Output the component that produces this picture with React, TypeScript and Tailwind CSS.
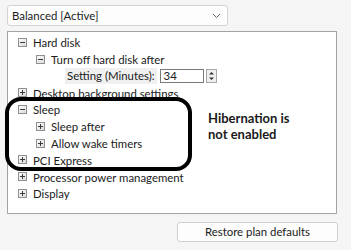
import { ReactNode } from 'react';

function Expander({ open }: { open: boolean }) {
  return (
    <svg width="9" height="9" viewBox="0 0 9 9" className="shrink-0">
      <defs>
        <linearGradient id={open ? 'gm' : 'gp'} x1="0" y1="0" x2="1" y2="1">
          <stop offset="0" stopColor="#ffffff" />
          <stop offset="1" stopColor="#d8d8d8" />
        </linearGradient>
      </defs>
      <rect x="0.5" y="0.5" width="8" height="8" fill={`url(#${open ? 'gm' : 'gp'})`} stroke="#8e8f8f" />
      <path d="M2 4.5h5" stroke="#3a3a3a" strokeWidth="1" />
      {!open && <path d="M4.5 2v5" stroke="#3a3a3a" strokeWidth="1" />}
    </svg>
  );
}

function Row({ level, open, children }: { level: number; open: boolean; children: ReactNode }) {
  return (
    <div className={`flex h-[16.8px] items-center gap-[6px] ${level === 0 ? 'pl-[10px]' : 'pl-[28px]'}`}>
      <Expander open={open} />
      <span className="whitespace-nowrap pt-[1px]">{children}</span>
    </div>
  );
}

export default function App() {
  return (
    <div className="relative h-[250px] w-[351px] overflow-hidden bg-[#f5f5f5] font-['Lato',sans-serif] text-[11.4px] text-[#1b1b1b]">
      {/* plan selector */}
      <div className="ml-[7px] mt-[5px] flex h-[21px] w-[221px] items-center justify-between rounded-[3px] border border-[#d3d3d3] bg-[#fdfdfd] pl-[4px] pr-[6px]">
        <span className="leading-none">Balanced [Active]</span>
        <svg width="9" height="6" viewBox="0 0 9 6">
          <path d="M1 1l3.5 3.5L8 1" fill="none" stroke="#6a6a6a" strokeWidth="1" />
        </svg>
      </div>

      {/* settings tree */}
      <div className="ml-[7px] mt-[5px] h-[183px] w-[330px] border border-[#a3a3a3] bg-white pt-[2px] leading-none">
        <Row level={0} open>Hard disk</Row>
        <Row level={1} open>Turn off hard disk after</Row>
        <div className="flex h-[16.8px] items-center pl-[57px]">
          <span className="whitespace-nowrap bg-[#f0f0f0] px-[2px] py-[2px]">Setting (Minutes):</span>
          <div className="ml-[3px] flex h-[14px] w-[44px] items-center border border-[#7a7a7a] pl-[3px]">34</div>
          <div className="ml-[2px] flex h-[14px] w-[11px] flex-col border border-[#a8a8a8] bg-[#eeeeee]">
            <svg width="9" height="6" viewBox="0 0 9 6"><path d="M2 4.5h5L4.5 2z" fill="#333" /></svg>
            <svg width="9" height="6" viewBox="0 0 9 6"><path d="M2 1.5h5L4.5 4z" fill="#333" /></svg>
          </div>
        </div>
        <Row level={0} open={false}>Desktop background settings</Row>
        <Row level={0} open>Sleep</Row>
        <Row level={1} open={false}>Sleep after</Row>
        <Row level={1} open={false}>Allow wake timers</Row>
        <Row level={0} open={false}>PCI Express</Row>
        <Row level={0} open={false}>Processor power management</Row>
        <Row level={0} open={false}>Display</Row>
      </div>

      {/* annotation */}
      <div className="absolute left-[5px] top-[97px] h-[74px] w-[187px] rounded-[16px] border-[4px] border-black" />
      <div className="absolute left-[208px] top-[110px] text-[13px] font-bold leading-[16px] text-[#1a1a1a]">
        Hibernation is
        <br />
        not enabled
      </div>

      <div className="ml-[177px] mt-[8px] flex h-[20px] w-[161px] items-center justify-center rounded-[3px] border border-[#d0d0d0] bg-[#fdfdfd]">
        Restore plan defaults
      </div>
    </div>
  );
}
